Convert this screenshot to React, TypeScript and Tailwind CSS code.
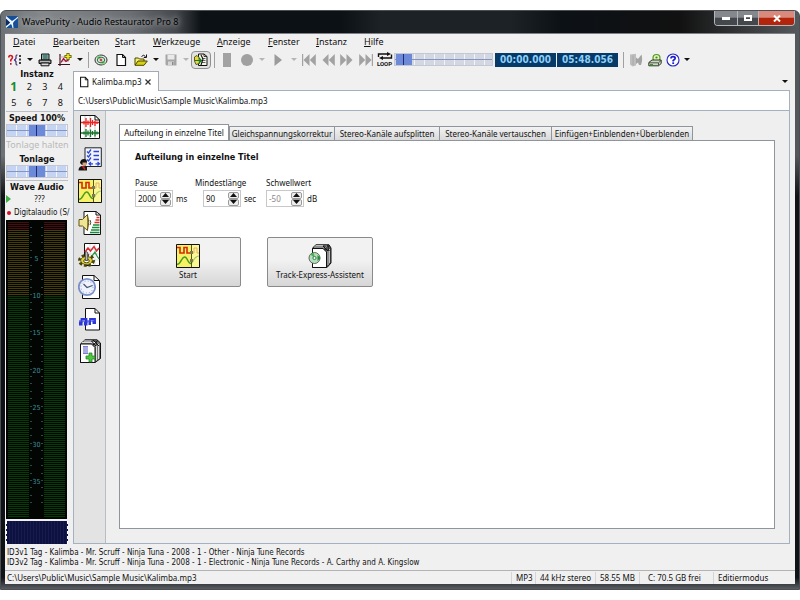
import React from 'react';

interface IconProps {
  className?: string;
}

interface ToolButtonProps {
  label: string;
  className?: string;
  disabled?: boolean;
  children: React.ReactNode;
}

interface SpinFieldProps {
  id: string;
  label: string;
  value: string;
  unit: string;
  disabled?: boolean;
  className?: string;
}

/* ---------- Toolbar icons ---------- */

const icon14 = 'h-3.5 w-3.5 shrink-0';

const WizardIcon = () => (
  <svg viewBox="0 0 14 14" className={icon14}>
    <path d="M.8 4.500 Q.8 2.500 2.500 2.500 Q4.500 2.500 4.500 4.300 Q4.500 5.500 2.800 7 V8.500 M2.800 10 V11.700" fill="none" stroke="#d4161c" strokeWidth="1.600" />
    <path d="M9.500 2 H8.800 Q8 2 8 3.500 V5.500 L6.500 7 L8 8.500 V10.500 Q8 12 8.800 12 H9.500" fill="none" stroke="#3a1c78" strokeWidth="1.100" />
    <path d="M12 2 V12.500" stroke="#111" strokeWidth="1.600" strokeDasharray="2 1.500" />
  </svg>
);

const PrinterIcon = () => (
  <svg viewBox="0 0 14 14" className={icon14}>
    <path d="M3.500 1 H11 V7 H3.500 Z" fill="#8fb5ae" stroke="#111" />
    <path d="M5 3 H9.500 M5 5 H9.500" stroke="#1d4f48" />
    <path d="M1 7 H13 V10.500 H1 Z" fill="#777" stroke="#111" />
    <path d="M3 10 H11 V12.800 H3 Z" fill="#ddd" stroke="#111" />
    <path d="M2 8.500 H12" stroke="#ccc" strokeWidth=".8" />
  </svg>
);

const NewChartIcon = () => (
  <svg viewBox="0 0 14 14" className={icon14}>
    <path d="M2 1 V13 M0 11.500 H12" stroke="#3a1320" strokeWidth="1.200" />
    <path d="M1 4 H9 M1 8 H11" stroke="#b98390" strokeWidth=".7" />
    <path d="M3 9.500 L5.500 5.500 L8 8.500 L11 6.500" fill="none" stroke="#a3123a" strokeWidth="1.300" />
    <path d="M10 0 V7 M6.500 3.500 H13.500" stroke="#555200" strokeWidth="3" />
    <path d="M10 .8 V6.200 M7.300 3.500 H12.700" stroke="#f4ec1c" strokeWidth="1.600" />
  </svg>
);

const DiscIcon = () => (
  <svg viewBox="0 0 14 14" className={icon14}>
    <ellipse cx="7" cy="7" rx="6" ry="5" fill="#dfe4df" stroke="#333" />
    <path d="M7 7 L2 4.500 A6 5 0 0 1 6 2.300 Z M7 7 L12 9.500 A6 5 0 0 1 8 11.700 Z" fill="#8ccf8c" />
    <ellipse cx="7" cy="7" rx="3.700" ry="2.800" fill="none" stroke="#277c3a" />
    <circle cx="7" cy="7" r="1.300" fill="#d33b5c" />
  </svg>
);

const PageIcon = ({ className = icon14 }: IconProps) => (
  <svg viewBox="0 0 14 14" className={className}>
    <path d="M3 1.500 H8.500 L11.500 4.500 V12.500 H3 Z" fill="#fff" stroke="#111" strokeWidth="1.200" />
    <path d="M8.500 1.500 V4.500 H11.500" fill="none" stroke="#111" />
  </svg>
);

const OpenIcon = () => (
  <svg viewBox="0 0 14 14" className={icon14}>
    <path d="M1 12 V5 H4.500 L5.500 6 H10 V8" fill="#f5f06a" stroke="#4a4700" />
    <path d="M1 12.300 L4 8 H13.300 L10 12.300 Z" fill="#d8d012" stroke="#4a4700" />
    <path d="M7.500 3.500 Q9.500 1 11.500 3.500 M12.500 1.500 V4.500 H9.800" fill="none" stroke="#111" />
  </svg>
);

const SaveIcon = () => (
  <svg viewBox="0 0 14 14" className={icon14}>
    <path d="M1.500 1.500 H12.500 V12.500 H2.500 L1.500 11.500 Z" fill="#a5a5a5" />
    <path d="M3.500 2 H10.500 V6.500 H3.500 Z" fill="#e9e9e9" />
    <path d="M4 8.500 H10 V12.500 H4 Z" fill="#d5d5d5" />
    <path d="M8 9 H9.500 V12 H8 Z" fill="#8b8b8b" />
  </svg>
);

const TagsIcon = () => (
  <svg viewBox="0 0 16 16" className="h-4 w-4 shrink-0">
    <path d="M5.500 2 H11 L14 4.500 V13.500 H5.500 Z" fill="#f6f6ee" stroke="#111" />
    <path d="M11 2 V4.500 H14" fill="none" stroke="#111" strokeWidth=".8" />
    <path d="M9 6.500 H12.500 M9.500 8.500 H12.500 M9 10.500 H12.500" stroke="#444" strokeWidth=".8" />
    <path d="M1.500 5 L4 3.500 L6 5.500 L6.500 11.500 L3 12.500 L1.500 9 Z" fill="#e5da43" stroke="#3c3c00" strokeWidth=".8" />
    <path d="M2 8.500 H8 M6 6 L8.500 8.500 L6 11" fill="none" stroke="#127a20" strokeWidth="1.200" />
    <path d="M8 3 L10 7 L8 13" fill="none" stroke="#111" strokeWidth="1.100" />
  </svg>
);

const StopIcon = () => (
  <svg viewBox="0 0 14 14" className={icon14}>
    <path d="M3 0 H11 V14 H3 Z" fill="#a2a2a2" />
  </svg>
);

const RecordIcon = () => (
  <svg viewBox="0 0 14 14" className={icon14}>
    <circle cx="7" cy="7" r="6" fill="#a0a0a0" />
  </svg>
);

const PlayIcon = () => (
  <svg viewBox="0 0 14 14" className={icon14}>
    <path d="M3.500 1 L11 7 L3.500 13 Z" fill="#9b9b9b" />
  </svg>
);

const SkipIcon = ({ dir, bar }: { dir: 'back' | 'forward'; bar?: boolean }) => (
  <svg viewBox="0 0 14 14" className={icon14}>
    <g fill="#a2a2a2" transform={dir === 'forward' ? 'matrix(-1 0 0 1 14 0)' : undefined}>
      <path d="M7.500 1 V13 L1.500 7 Z M13.800 1 V13 L7.800 7 Z" />
      {bar && <path d="M0 1 H1.200 V13 H0 Z" />}
    </g>
  </svg>
);

const LoopIcon = () => (
  <svg viewBox="0 0 16 8" className="h-2 w-4 shrink-0">
    <path d="M1.500 5 V2 H11 M14.500 2.500 V6 H5" fill="none" stroke="#111" strokeWidth="1.400" />
    <path d="M10 0 L14 2 L10 4 Z M6 4 L2 6 L6 8 Z" fill="#111" />
  </svg>
);

const MutedIcon = () => (
  <svg viewBox="0 0 14 14" className={icon14}>
    <path d="M1 1.500 L7 .8 V12.500 L3.500 13.500 L1 11.500 Z" fill="#bdbdbd" />
    <path d="M7 4.500 L9 6 L12.500 1.500 Q14 7 12 12 H10 L9 9.500 L7 11 Z" fill="#a3a3a3" />
    <path d="M4 2.500 V12" stroke="#a8a8a8" />
  </svg>
);

const BurnIcon = () => (
  <svg viewBox="0 0 14 14" className={icon14}>
    <circle cx="8.500" cy="5" r="3.500" fill="#e4efc4" stroke="#4f9c1c" strokeWidth="1.200" />
    <circle cx="8.500" cy="4.500" r="1.100" fill="#3f8c1c" />
    <path d="M.8 9.500 L4 7 H13.200 V10.500 L10.500 12.800 H.8 Z" fill="#cdd8c6" stroke="#2c3a24" />
    <path d="M1 9.800 H10.500 L13 7.500 M10.500 10 V12.500" fill="none" stroke="#2c3a24" strokeWidth=".8" />
    <path d="M2 11.500 H5" stroke="#2f9a24" />
  </svg>
);

const HelpIcon = () => (
  <svg viewBox="0 0 14 14" className={icon14}>
    <circle cx="7" cy="7" r="6" fill="#fff" stroke="#2226c4" strokeWidth="1.100" />
    <path d="M5 5.500 Q5 3.700 7 3.700 Q9.200 3.700 9.200 5.300 Q9.200 6.300 7.200 7.400 V8.400" fill="none" stroke="#1a1ed0" strokeWidth="1.700" />
    <path d="M6.300 9.300 H8.100 V11 H6.300 Z" fill="#1a1ed0" />
  </svg>
);

/* ---------- Sidebar icons ---------- */

const icon24 = 'h-6 w-6 shrink-0';

const WaveSheetIcon = () => (
  <svg viewBox="0 0 24 24" className={icon24}>
    <path d="M2.500 .5 H17 L21.500 5 V23.500 H2.500 Z" fill="#fff" stroke="#111" />
    <path d="M17 .5 V5 H21.500 Z" fill="#fff" stroke="#111" />
    <path d="M7 1 V23 M12 1 V23 M17 6 V23" fill="none" stroke="#999" strokeWidth=".5" />
    <path d="M3 7.500 H21 M6 6 V9.500 M8 3 V12 M10 5.500 V10 M12.500 3 V12 M14.500 5 V10 M17 5.500 V11 M19 6.500 V9" stroke="#ee231f" strokeWidth="1.300" />
    <path d="M3 18 H21 M6 16.500 V19.500 M8 14 V22 M10 15.500 V20.500 M12.500 14.500 V22 M14.500 16 V20 M17 15 V21.500 M19 16.500 V19.500" stroke="#16752a" strokeWidth="1.300" />
  </svg>
);

const ChecklistIcon = () => (
  <svg viewBox="0 0 24 24" className={icon24}>
    <path d="M7 .8 H23.300 V19.500 H7 Z" fill="#f2f5ff" stroke="#222" />
    <path d="M9 4.500 L10.500 6 L13 2.500 M9 8.500 L10.500 10 L13 6.500 M9 12.500 L10.500 14 L13 10.500 M15.500 4.500 H21 M15.500 8.500 H21 M15.500 12.500 H21" fill="none" stroke="#2b46d4" strokeWidth="1.300" />
    <path d="M11 16.800 H15 M17.500 16.800 H21.500 M13 15 L11 16.800 L13 18.500 M19.500 15 L21.500 16.800 L19.500 18.500" fill="none" stroke="#2b46d4" strokeWidth="1.200" />
    <path d="M2 16 Q2.500 12 6 12 Q9 12 9 15 L8 18 H4 Z" fill="#111" />
    <path d="M4.500 15.500 H8.500 V18 L6 19 L4.500 18 Z" fill="#d9a07c" />
    <path d="M.5 23.500 Q.5 19.500 4 19 L9 19.500 V23.500 Z" fill="#161616" />
    <path d="M4.500 19 L7 22.500" stroke="#d52020" strokeWidth="1.500" />
  </svg>
);

const SplitIcon = () => (
  <svg viewBox="0 0 24 24" className={icon24}>
    <path d="M.5 .5 H23.500 V23.500 H.5 Z" fill="#f6f165" stroke="#111" />
    <path d="M16 1 H23 V23 H16 Z" fill="#fbf795" />
    <path d="M1 3.500 H4 V9 H8 V3.500 H11 V9 H15" fill="none" stroke="#d8280d" strokeWidth="1.600" />
    <path d="M16 9 H18 V4 H21 V9 H23" fill="none" stroke="#e9ac66" />
    <path d="M1 20.500 Q3.500 20 5.500 16 Q8.500 10.500 11 15 Q13 19.500 15 19.500" fill="none" stroke="#4b9a1e" strokeWidth="1.500" />
    <path d="M16 19 Q19 12 23 12" fill="none" stroke="#a5ca66" strokeWidth="1.200" />
    <path d="M15.500 1 V23" stroke="#55551c" />
    <path d="M14 7 H17 V10 H14 Z M14 15 H17 V18 H14 Z" fill="#7b7b55" />
  </svg>
);

const VolumeIcon = () => (
  <svg viewBox="0 0 24 24" className={icon24}>
    <path d="M6 .5 H18 L22.500 4 V23.500 H6 Z" fill="#fff" stroke="#111" />
    <path d="M18 .5 V4 H22.500" fill="none" stroke="#111" />
    <path d="M12 21.500 H21.500 M13 19 H21.500 M14 16.500 H21.500 M15 14 H21.500" stroke="#1c8a3c" strokeWidth="1.500" />
    <path d="M16.500 11.500 H21.500 M17.500 9 H21.500 M18.500 6.500 H21.500" stroke="#d5302a" strokeWidth="1.500" />
    <path d="M1 8.500 H4.500 L9.500 3.500 V19.500 L4.500 15 H1 Z" fill="#efe493" stroke="#5f5614" />
    <path d="M9.500 4 Q12 11 9.500 19" fill="#c9b84a" stroke="#5f5614" />
    <path d="M12 9 Q13.500 11.500 12 14" fill="none" stroke="#444" />
  </svg>
);

const GearChartIcon = () => (
  <svg viewBox="0 0 24 24" className={icon24}>
    <path d="M6.500 .5 H21.500 V22.500 H6.500 Z" fill="#fff" stroke="#111" />
    <path d="M7 6 H21 M7 11 H21 M7 17 H21 M12 1 V22 M17 1 V22" stroke="#ccc" strokeWidth=".6" />
    <path d="M7 9 L10 5 L12.500 8 L16 3.500 L18.500 8 L21 5" fill="none" stroke="#dc2b35" strokeWidth="1.500" />
    <path d="M14 13 L17 9 L19 13 L21 16" fill="none" stroke="#2c9d49" strokeWidth="1.300" />
    <ellipse cx="8.500" cy="17.500" rx="6.500" ry="4.500" fill="none" stroke="#4b4608" strokeWidth="4" strokeDasharray="2.500 1.700" />
    <ellipse cx="8.500" cy="17.500" rx="5.800" ry="4" fill="#e2d63e" stroke="#4b4608" strokeWidth=".8" />
    <ellipse cx="8.500" cy="18" rx="2.800" ry="1.800" fill="#fff" stroke="#4b4608" />
    <path d="M7.300 9.500 Q8.500 8 9.800 9.500 V17.500 H7.300 Z" fill="#bbb" stroke="#333" strokeWidth=".8" />
  </svg>
);

const ClockIcon = () => (
  <svg viewBox="0 0 24 24" className={icon24}>
    <path d="M4.500 .5 H16 L21.500 5.500 V23.500 H4.500 Z" fill="#fff" stroke="#111" />
    <path d="M16 .5 V5.500 H21.500" fill="none" stroke="#111" />
    <circle cx="9" cy="12" r="8.200" fill="#eef3fd" stroke="#7b90c8" strokeWidth="1.800" />
    <circle cx="9" cy="12" r="6" fill="none" stroke="#8f9fc8" strokeDasharray="1 2.140" />
    <path d="M5.500 9 L9 12.500 L14.500 10.500" fill="none" stroke="#4a5470" strokeWidth="1.200" />
  </svg>
);

const NotesIcon = () => (
  <svg viewBox="0 0 24 24" className={icon24}>
    <path d="M7.500 1.500 H17 L21.500 6 V23 H7.500 Z" fill="#fff" stroke="#111" />
    <path d="M17 1.500 V6 H21.500" fill="none" stroke="#111" />
    <path d="M3.500 16 V12 H8.500 V16 M12 16 V12 H17 V16" fill="none" stroke="#2a36dc" strokeWidth="1.800" />
    <path d="M1 14.500 H4.500 V18.500 H1 Z M6 14.500 H9.500 V18.500 H6 Z M10.500 14 H13 V18 H10.500 Z M14.500 13.500 H18 V17 H14.500 Z" fill="#2a36dc" />
    <path d="M1 14 H18" stroke="#3b45dd" strokeWidth="1.200" />
  </svg>
);

const AddTracksIcon = () => (
  <svg viewBox="0 0 24 24" className={icon24}>
    <path d="M2.500 5 L7 .8 H19 L22.500 4 V19.500 L17 23.500 H2.500 Z" fill="#777" stroke="#111" />
    <path d="M4 3.500 H17 M5.500 2 H18 M18.500 6 V21.500 M20.500 5 V20" stroke="#ddd" />
    <path d="M2.500 5 H13.500 L17 8.500 V23.500 H2.500 Z" fill="#fff" stroke="#111" />
    <path d="M13.500 2 H18 V7 Z" fill="#fff" stroke="#111" />
    <path d="M15 1 L21 7 M20 1.500 L15 6" stroke="#111" />
    <path d="M5 7 H10 V15 H5 Z" fill="#7a80cf" />
    <path d="M5 9 H10 M5 11 H10 M5 13 H10" stroke="#fff" strokeWidth=".7" />
    <path d="M11 14 H14 V17 H17 V20 H14 V23 H11 V20 H8 V17 H11 Z" fill="#4fc640" stroke="#1b7a1c" strokeWidth=".7" />
  </svg>
);

const ExpressIcon = () => (
  <svg viewBox="0 0 24 24" className={icon24}>
    <path d="M4.500 4 L8 .8 H21 L23 4 V19 L19 23.500 H4.500 Z" fill="#555" stroke="#111" />
    <path d="M6 3 H18 M7.500 1.500 H19 M20 6 V21 M21.500 5 V19" stroke="#ddd" strokeWidth=".8" />
    <path d="M4.500 4.500 H15 L18.500 8 V23.500 H4.500 Z" fill="#fff" stroke="#111" />
    <path d="M15 2 H20 V7 Z" fill="#fff" stroke="#111" />
    <path d="M16 1.500 L21.500 7 M21 1.500 L16.500 6" stroke="#111" />
    <circle cx="6.500" cy="14" r="5.500" fill="#b5dfb9" stroke="#444" strokeWidth=".8" />
    <path d="M6.500 14 L2.500 10.500 A5.500 5.500 0 0 1 6 8.600 Z" fill="#4cb15a" />
    <path d="M9.500 11 L12.500 14 L9.500 17 Z" fill="#1c8f33" />
    <circle cx="6.500" cy="14" r="1.600" fill="#fff" stroke="#2f7e54" />
  </svg>
);

const AppLogo = () => (
  <svg viewBox="0 0 14 14" className="h-3.5 w-3.5 shrink-0">
    <path d="M1 1 H13 V13 H1 Z" fill="#164f98" />
    <path d="M1 3 L5.500 7.500 L1 11.500 Z" fill="#0a2c63" />
    <path d="M1 1 L7 6 Q10.500 4 13 1.500 V3 Q9.500 5.500 8 8 L8.500 13 H7.500 Q7 10 6 9 Q4 10.500 1 13 V11 Q4 9 5.200 7.500 Q3 5.500 1 3.500 Z" fill="#eef6ff" />
  </svg>
);

/* ---------- Small parts ---------- */

const boldFace = "font-['DejaVu_Sans_Condensed','DejaVu_Sans',sans-serif] text-[9px] font-bold";

const ToolButton: React.FC<ToolButtonProps> = ({ label, className = 'w-5', disabled = false, children }) => (
  <button
    type="button"
    title={label}
    aria-label={label}
    disabled={disabled}
    className={`flex h-[18px] shrink-0 items-center justify-center ${className}`}
  >
    {children}
  </button>
);

const CaretButton = ({ label, disabled = false }: { label: string; disabled?: boolean }) => (
  <ToolButton label={label} disabled={disabled} className="w-2.5">
    <svg viewBox="0 0 6 3" className="h-[3px] w-1.5">
      <path d="M0 0 H6 L3 3 Z" fill={disabled ? '#b5b5b5' : '#111'} />
    </svg>
  </ToolButton>
);

const Separator = () => (
  <div className="flex w-1.5 shrink-0 justify-center">
    <div className="h-4 w-px bg-[#a0a0a0]" />
  </div>
);

const sliderTrack =
  'block h-[13px] appearance-none border border-[#c3c8d4] bg-[linear-gradient(to_bottom,transparent_5px,#8596c0_5px,#8596c0_6px,transparent_6px),repeating-linear-gradient(to_right,transparent_0_9px,#f2f4fa_9px_10px)]';
const sliderThumb =
  '[&::-webkit-slider-thumb]:h-[11px] [&::-webkit-slider-thumb]:w-4 [&::-webkit-slider-thumb]:appearance-none [&::-webkit-slider-thumb]:bg-[linear-gradient(to_right,#6d8ad8_7px,#1b2f78_7px_8px,#6d8ad8_8px)]';

const SpinField: React.FC<SpinFieldProps> = ({ id, label, value, unit, disabled = false, className = '' }) => (
  <div>
    <label htmlFor={id} className="block leading-3">
      {label}
    </label>
    <div className={`mt-px flex items-center gap-[3px] ${className}`}>
      <div className="flex h-[17px] items-center border border-[#c8c8c8] bg-white pr-px">
        <input
          id={id}
          type="text"
          defaultValue={value}
          disabled={disabled}
          className="h-full w-6 bg-white pl-0.5 text-[#111] outline-none disabled:text-[#888]"
        />
        <div className="flex flex-col">
          {['mehr', 'weniger'].map((step) => (
            <button
              key={step}
              type="button"
              aria-label={`${label} ${step}`}
              className="flex h-[7px] w-[11px] items-center justify-center rounded-xs border border-[#9a9a9a] bg-[#eee]"
            >
              <svg viewBox="0 0 7 4" className="h-1 w-[7px]">
                <path d={step === 'mehr' ? 'M3.500 0 L7 4 H0 Z' : 'M0 0 H7 L3.500 4 Z'} fill="#111" />
              </svg>
            </button>
          ))}
        </div>
      </div>
      <span>{unit}</span>
    </div>
  </div>
);

/* ---------- Window sections ---------- */

const TitleBar = () => (
  <header className="flex h-[23px] items-start border-b border-[#7d8185]">
    <div className="flex h-full flex-1 items-center gap-[3px]">
      <AppLogo />
      <h1 className="text-[9px] text-black [text-shadow:0_0_5px_#b5b8ba,0_0_8px_#a5a8aa]">
        WavePurity - Audio Restaurator Pro 8
      </h1>
    </div>
    <div className="flex h-[15px] overflow-hidden rounded-b border border-t-0 border-[#b4b7ba]">
      <button type="button" aria-label="Minimieren" className="flex w-[23px] items-center justify-center border-r border-[#b4b7ba] bg-linear-to-b from-[#85898d] from-45% to-[#44484c] to-50%">
        <span className="h-[3px] w-2 bg-white" />
      </button>
      <button type="button" aria-label="Maximieren" className="flex w-[21px] items-center justify-center border-r border-[#b4b7ba] bg-linear-to-b from-[#85898d] from-45% to-[#44484c] to-50%">
        <span className="h-1.5 w-2 border-2 border-white" />
      </button>
      <button type="button" aria-label="Schließen" className="flex w-[35px] items-center justify-center bg-linear-to-b from-[#d98a7c] from-45% to-[#b3240c] to-50%">
        <svg viewBox="0 0 8 7" className="h-[7px] w-2">
          <path d="M1 .5 L7 6.500 M7 .5 L1 6.500" stroke="#fff" strokeWidth="2" />
        </svg>
      </button>
    </div>
  </header>
);

const menus = [
  { name: 'Datei', width: 'w-10' },
  { name: 'Bearbeiten', width: 'w-[62px]' },
  { name: 'Start', width: 'w-[38px]' },
  { name: 'Werkzeuge', width: 'w-16' },
  { name: 'Anzeige', width: 'w-[51px]' },
  { name: 'Fenster', width: 'w-12' },
  { name: 'Instanz', width: 'w-12' },
  { name: 'Hilfe', width: 'w-10' },
];

const MenuBar = () => (
  <nav className="flex h-4 items-center pl-2 text-[9px]">
    {menus.map(({ name, width }) => (
      <button key={name} type="button" className={`shrink-0 text-left ${width}`}>
        <span className="underline">{name.charAt(0)}</span>
        {name.slice(1)}
      </button>
    ))}
  </nav>
);

const Toolbar = () => (
  <div className="flex h-[19px] items-center">
    <ToolButton label="Assistent"><WizardIcon /></ToolButton>
    <CaretButton label="Assistent wählen" />
    <ToolButton label="Drucken"><PrinterIcon /></ToolButton>
    <ToolButton label="Neue Analyse"><NewChartIcon /></ToolButton>
    <CaretButton label="Analyse wählen" />
    <Separator />
    <ToolButton label="CD einlesen"><DiscIcon /></ToolButton>
    <ToolButton label="Neu"><PageIcon /></ToolButton>
    <ToolButton label="Öffnen"><OpenIcon /></ToolButton>
    <CaretButton label="Zuletzt geöffnet" />
    <ToolButton label="Speichern" disabled><SaveIcon /></ToolButton>
    <CaretButton label="Speichern als" disabled />
    <ToolButton label="Editiermodus" className="w-5 rounded-sm border border-[#8f8f8f] bg-[#e2e2e2]"><TagsIcon /></ToolButton>
    <Separator />
    <ToolButton label="Stopp" disabled><StopIcon /></ToolButton>
    <ToolButton label="Aufnahme" disabled><RecordIcon /></ToolButton>
    <CaretButton label="Aufnahmeoptionen" disabled />
    <ToolButton label="Wiedergabe" className="w-[22px]" disabled><PlayIcon /></ToolButton>
    <CaretButton label="Wiedergabeoptionen" disabled />
    <ToolButton label="Zum Anfang" className="w-[19px]" disabled><SkipIcon dir="back" bar /></ToolButton>
    <ToolButton label="Zurück" className="w-[19px]" disabled><SkipIcon dir="back" /></ToolButton>
    <ToolButton label="Vor" className="w-[19px]" disabled><SkipIcon dir="forward" /></ToolButton>
    <ToolButton label="Zum Ende" className="w-[19px]" disabled><SkipIcon dir="forward" bar /></ToolButton>
    <ToolButton label="Loop" className="w-[19px] flex-col">
      <LoopIcon />
      <span className="font-[Roboto,sans-serif] text-[6px] leading-[7px] font-bold">LOOP</span>
    </ToolButton>
    <input type="range" aria-label="Position" defaultValue={1} className={`w-[99px] shrink-0 bg-[#d3d7e2] ${sliderTrack} ${sliderThumb}`} />
    <div className="ml-0.5 flex shrink-0 gap-px font-['DejaVu_Sans_Condensed','DejaVu_Sans',sans-serif] text-[10px] leading-[14px] font-bold text-[#8fd0f8]">
      <span className="w-[61px] bg-[#063a68] text-center">00:00.000</span>
      <span className="w-[61px] bg-[#063a68] text-center">05:48.056</span>
    </div>
    <div className="ml-0.5 flex items-center">
      <Separator />
      <ToolButton label="Stumm" disabled><MutedIcon /></ToolButton>
      <ToolButton label="Brennen" className="w-[18px]"><BurnIcon /></ToolButton>
      <ToolButton label="Hilfe" className="w-[18px]"><HelpIcon /></ToolButton>
      <CaretButton label="Hilfethemen" />
    </div>
  </div>
);

const Meter = () => (
  <svg viewBox="0 0 61 299" className="block w-full font-['DejaVu_Sans_Condensed','DejaVu_Sans',sans-serif]">
    <path d="M0 0 H61 V299 H0 Z" fill="#030503" />
    {Array.from({ length: 148 }, (_, i) => (
      <path
        key={i}
        d={`M2 ${i * 2 + 2.5} H23 M38 ${i * 2 + 2.5} H59`}
        stroke={i < 4 ? '#4a0c0c' : i < 37 ? '#453c0a' : '#053c05'}
      />
    ))}
    {Array.from({ length: 38 }, (_, i) => {
      const y = Math.round((i + 1) * 7.43) + 0.5;
      return <path key={i} d={`M24 ${y} H26 M35 ${y} H37`} stroke="#1c4f55" />;
    })}
    {[5, 10, 15, 20, 25, 30, 35].map((db) => (
      <text key={db} x="30.500" y={Math.round(db * 7.43) + 4} textAnchor="middle" fontSize="7" fill="#3d8f99">
        {db}
      </text>
    ))}
  </svg>
);

const LeftPanel = () => (
  <aside className="flex w-[62px] shrink-0 flex-col">
    <h2 className={`text-center leading-[10px] ${boldFace}`}>Instanz</h2>
    <div className="grid grid-cols-4 text-center text-[9px]">
      {[1, 2, 3, 4, 5, 6, 7, 8].map((n) => (
        <button
          key={n}
          type="button"
          className={n === 1 ? 'h-4 text-[12px] leading-4 font-bold text-[#1e8a2c]' : 'h-4'}
        >
          {n}
        </button>
      ))}
    </div>
    <div className="border-t border-[#b8bfc6] text-center">
      <label htmlFor="speed" className={`block leading-3 ${boldFace}`}>Speed 100%</label>
      <input id="speed" type="range" defaultValue={50} className={`w-full bg-[#c5d4f3] ${sliderTrack} ${sliderThumb}`} />
      <p className="text-[9px] leading-4 whitespace-nowrap text-[#b9b9b9]">Tonlage halten</p>
      <label htmlFor="pitch" className={`block leading-3 ${boldFace}`}>Tonlage</label>
      <input id="pitch" type="range" defaultValue={50} className={`w-full bg-[#c5d4f3] ${sliderTrack} ${sliderThumb}`} />
    </div>
    <div className="mt-0.5 border-t border-[#b8bfc6]">
      <h2 className={`text-center leading-3 whitespace-nowrap ${boldFace}`}>Wave Audio</h2>
      <div className="flex h-3 items-center">
        <svg viewBox="0 0 5 8" className="h-2 w-[5px]">
          <path d="M0 0 L5 4 L0 8 Z" fill="#3fae4b" />
        </svg>
        <span className="flex-1 text-center">???</span>
      </div>
      <div className="flex h-[15px] items-center gap-[3px] pl-px font-['DejaVu_Sans_Condensed','DejaVu_Sans',sans-serif] whitespace-nowrap">
        <span className="h-1 w-1 shrink-0 rounded-full bg-[#d01228]" />
        Digitalaudio (S/
      </div>
    </div>
    <div className="w-[61px]">
      <Meter />
    </div>
    <div className="mt-0.5 min-h-[23px] flex-1 border-x border-dashed border-white bg-[#0c1140] bg-[repeating-linear-gradient(to_right,transparent_0_2px,#171b50_2px_3px)]" />
  </aside>
);

const sideTools = [
  { label: 'Wellenform', Icon: WaveSheetIcon },
  { label: 'Aufgaben', Icon: ChecklistIcon },
  { label: 'Aufteilen', Icon: SplitIcon },
  { label: 'Lautstärke', Icon: VolumeIcon },
  { label: 'Filter', Icon: GearChartIcon },
  { label: 'Zeit', Icon: ClockIcon },
  { label: 'Noten', Icon: NotesIcon },
  { label: 'Stapel', Icon: AddTracksIcon },
];

const tabs = [
  { name: 'Gleichspannungskorrektur', width: 'w-[106px]' },
  { name: 'Stereo-Kanäle aufsplitten', width: 'w-[106px]' },
  { name: 'Stereo-Kanäle vertauschen', width: 'w-[113px]' },
  { name: 'Einfügen+Einblenden+Überblenden', width: 'w-[142px]' },
];

const ActionButton = ({ label, children }: { label: string; children: React.ReactNode }) => (
  <button
    type="button"
    className="flex h-[50px] w-[106px] flex-col items-center justify-center gap-px rounded-xs border border-[#8a8a8a] bg-linear-to-b from-[#f2f2f2] from-45% to-[#d6d6d6] pt-px whitespace-nowrap"
  >
    {children}
    <span className="leading-3">{label}</span>
  </button>
);

const Workspace = () => (
  <div className="flex flex-1 flex-col bg-[#efefef] pt-[13px] pr-3.5 pb-3.5 pl-[13px]">
    <div role="tablist" className="flex items-end">
      <button role="tab" aria-selected="true" type="button" className="-mb-px h-[17px] w-[110px] border border-b-0 border-[#8e959c] bg-white whitespace-nowrap">
        Aufteilung in einzelne Titel
      </button>
      {tabs.map(({ name, width }) => (
        <button
          key={name}
          role="tab"
          aria-selected="false"
          type="button"
          className={`-mr-px h-[14px] border border-b-0 border-[#8e959c] bg-linear-to-b from-[#f3f3f3] to-[#d9d9d9] leading-3 whitespace-nowrap ${width}`}
        >
          {name}
        </button>
      ))}
    </div>
    <section className="flex-1 border border-[#8e959c] bg-white px-[15px] pt-2.5">
      <h2 className={`leading-3 ${boldFace}`}>Aufteilung in einzelne Titel</h2>
      <div className="mt-3.5 grid grid-cols-[60px_71px_auto] items-start">
        <SpinField id="pause" label="Pause" value="2000" unit="ms" />
        <SpinField id="length" label="Mindestlänge" value="90" unit="sec" className="pl-2" />
        <SpinField id="threshold" label="Schwellwert" value="-50" unit="dB" disabled />
      </div>
      <div className="mt-[30px] flex gap-[26px]">
        <ActionButton label="Start"><SplitIcon /></ActionButton>
        <ActionButton label="Track-Express-Assistent"><ExpressIcon /></ActionButton>
      </div>
    </section>
  </div>
);

const DocumentArea = () => (
  <main className="flex flex-1 flex-col px-[5px] pt-0.5">
    <div className="flex items-end justify-between">
      <div className="z-10 -mb-px flex h-5 w-[86px] items-center border border-b-0 border-[#a3aab1] bg-white pl-1">
        <PageIcon className="h-3 w-3 shrink-0" />
        <span className="ml-0.5 flex-1 whitespace-nowrap">Kalimba.mp3</span>
        <button type="button" aria-label="Kalimba.mp3 schließen" className="mr-[7px]">
          <svg viewBox="0 0 6 6" className="h-1.5 w-1.5">
            <path d="M.5 .5 L5.500 5.500 M5.500 .5 L.5 5.500" stroke="#333" strokeWidth="1.200" />
          </svg>
        </button>
      </div>
      <CaretButton label="Dokumentliste" />
    </div>
    <div className="flex flex-1 flex-col border border-[#a3b1c0] bg-white">
      <p className="h-[19px] pl-1 leading-5">C:\Users\Public\Music\Sample Music\Kalimba.mp3</p>
      <div className="flex flex-1 border-t border-[#a3b1c0]">
        <div className="flex w-8 shrink-0 flex-col items-center gap-2 border-r border-[#b6bdc4] bg-[#e3e3e3] pt-1">
          {sideTools.map(({ label, Icon }) => (
            <button key={label} type="button" title={label} aria-label={label}>
              <Icon />
            </button>
          ))}
        </div>
        <Workspace />
      </div>
    </div>
  </main>
);

const StatusBar = () => (
  <footer className="flex h-[14px] items-center border-t border-[#b3b3b3] pl-0.5 whitespace-nowrap">
    <span className="flex-1">C:\Users\Public\Music\Sample Music\Kalimba.mp3</span>
    <span className="w-6 border-l border-[#d5d5d5] pl-1">MP3</span>
    <span className="w-[60px] border-l border-[#d5d5d5] pl-1">44 kHz stereo</span>
    <span className="w-11 border-l border-[#d5d5d5] pl-1">58.55 MB</span>
    <span className="w-[74px] border-l border-[#d5d5d5] pl-2">C: 70.5 GB frei</span>
    <span className="w-[82px] border-l border-[#d5d5d5] pl-1">Editiermodus</span>
  </footer>
);

const App = () => (
  <div className="flex min-h-screen flex-col bg-white py-2.5 font-['Noto_Sans','Open_Sans',sans-serif] text-[8px] text-[#111]">
    <div className="flex flex-1 flex-col rounded-t-md border border-[#4b4f53] bg-[linear-gradient(to_bottom,transparent_0,transparent_25%,#101316_32%,#101316_98%,#5a5e62),linear-gradient(to_right,#6c7175_0,#85898c_40px,#6b6f73_130px,#44484c_175px,#0c1116_200px,#0c1116_340px,#1d2227_380px,#1d2227_510px,#0c1116_560px,#111_85%,#55595c)] px-1 pb-[5px]">
      <TitleBar />
      <div className="flex flex-1 flex-col bg-[#f0f0f0]">
        <MenuBar />
        <Toolbar />
        <div className="flex flex-1 pl-px">
          <LeftPanel />
          <DocumentArea />
        </div>
        <div className="px-0.5 pt-1 pb-0.5 font-['DejaVu_Sans_Condensed','DejaVu_Sans',sans-serif] leading-[10px]">
          <p>ID3v1 Tag - Kalimba - Mr. Scruff - Ninja Tuna - 2008 - 1 - Other - Ninja Tune Records</p>
          <p>ID3v2 Tag - Kalimba - Mr. Scruff - Ninja Tuna - 2008 - 1 - Electronic - Ninja Tune Records - A. Carthy and A. Kingslow</p>
        </div>
        <StatusBar />
      </div>
    </div>
  </div>
);

export default App;
